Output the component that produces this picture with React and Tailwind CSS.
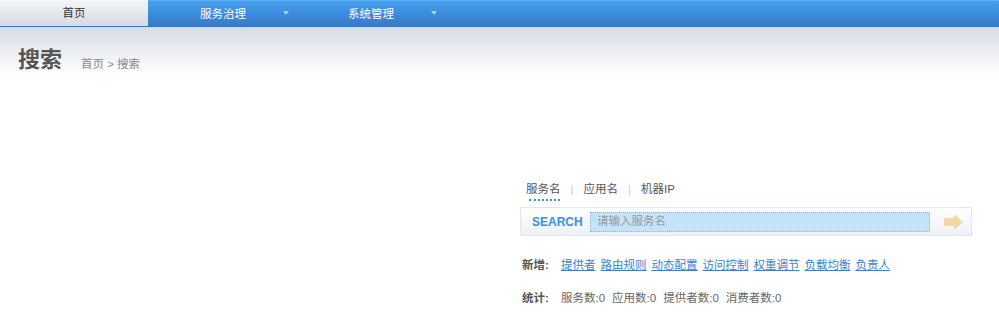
import React from "react";

const font = { fontFamily: '"Liberation Sans", "Noto Sans CJK SC", sans-serif' };

function Arrow() {
  return (
    <svg width="6" height="5" viewBox="0 0 6 5" className="ml-[37px] mt-[-3px]">
      <path d="M0 0 L6 0 L3 4 Z" fill="#a9cdf3" />
    </svg>
  );
}

export default function App() {
  const links = ["提供者", "路由规则", "动态配置", "访问控制", "权重调节", "负载均衡", "负责人"];
  return (
    <div className="w-[999px] h-[328px] bg-white overflow-hidden text-[#555]" style={font}>
      {/* nav */}
      <div className="flex h-[27px] bg-gradient-to-b from-[#47a0ee] via-[#3b8bdc] to-[#3a78c6] border-t border-[#5fb0f5]">
        <div className="w-[148px] h-full bg-gradient-to-b from-[#f3f5f8] to-[#d5dae1] flex items-center justify-center text-[11.5px] text-[#333] -mt-px pt-[2px]">
          首页
        </div>
        <div className="w-[148px] h-full flex items-center justify-start text-[11.5px] text-white pl-[52px] pt-[2px]">
          <span>服务治理</span>
          <Arrow />
        </div>
        <div className="w-[148px] h-full flex items-center justify-start text-[11.5px] text-white pl-[52px] pt-[2px]">
          <span>系统管理</span>
          <Arrow />
        </div>
      </div>
      {/* header */}
      <div className="h-[48px] bg-gradient-to-b from-[#d6dce4] via-[#eceef2] to-white flex items-end pl-[18px] pb-[4px]">
        <span className="text-[22px] font-bold text-[#555] leading-none">搜索</span>
        <span className="ml-[19px] text-[11.5px] text-[#8a8a8a] leading-none mb-[1px]">首页 &gt; 搜索</span>
      </div>
      {/* search block */}
      <div className="ml-[520px] w-[452px] mt-[107px]">
        <div className="flex items-center text-[11.5px] text-[#555] pl-[6px] h-[16px]">
          <span className="relative">
            服务名
            <span className="absolute left-[3px] right-[1px] top-[18px] border-t-2 border-dotted border-[#3a8ee0]"></span>
          </span>
          <span className="mx-[10px] text-[#ccc]">|</span>
          <span>应用名</span>
          <span className="mx-[10px] text-[#ccc]">|</span>
          <span>机器IP</span>
        </div>
        <div className="mt-[9px] h-[29px] border border-[#e2e7ee] bg-gradient-to-b from-white to-[#eef1f5] flex items-center">
          <span className="ml-[11px] text-[12px] font-bold text-[#3d8fe0] w-[58px]">SEARCH</span>
          <div className="w-[340px] h-[20px] bg-[#c5e3f8] border border-dotted border-[#8bb8ea] flex items-center pl-[6px] text-[11.5px] text-[#999]">
            请输入服务名
          </div>
          <svg width="20" height="16" viewBox="0 0 20 16" className="ml-[14px]">
            <path d="M0 4 H10 V0 L19 8 L10 16 V12 H0 Z" fill="#f4d6a8" />
          </svg>
        </div>
        <div className="mt-[21px] flex items-center text-[11.5px] pl-[2px]">
          <span className="font-bold text-[#555] w-[39px]">新增:</span>
          <div className="flex gap-[5px]">
            {links.map((l) => (
              <a key={l} href="#" className="text-[#3a80d2] underline">
                {l}
              </a>
            ))}
          </div>
        </div>
        <div className="mt-[16px] flex items-center text-[11.5px] pl-[2px] text-[#666]">
          <span className="font-bold text-[#555] w-[39px]">统计:</span>
          <span>服务数:0</span>
          <span className="ml-[7px]">应用数:0</span>
          <span className="ml-[7px]">提供者数:0</span>
          <span className="ml-[7px]">消费者数:0</span>
        </div>
      </div>
    </div>
  );
}
